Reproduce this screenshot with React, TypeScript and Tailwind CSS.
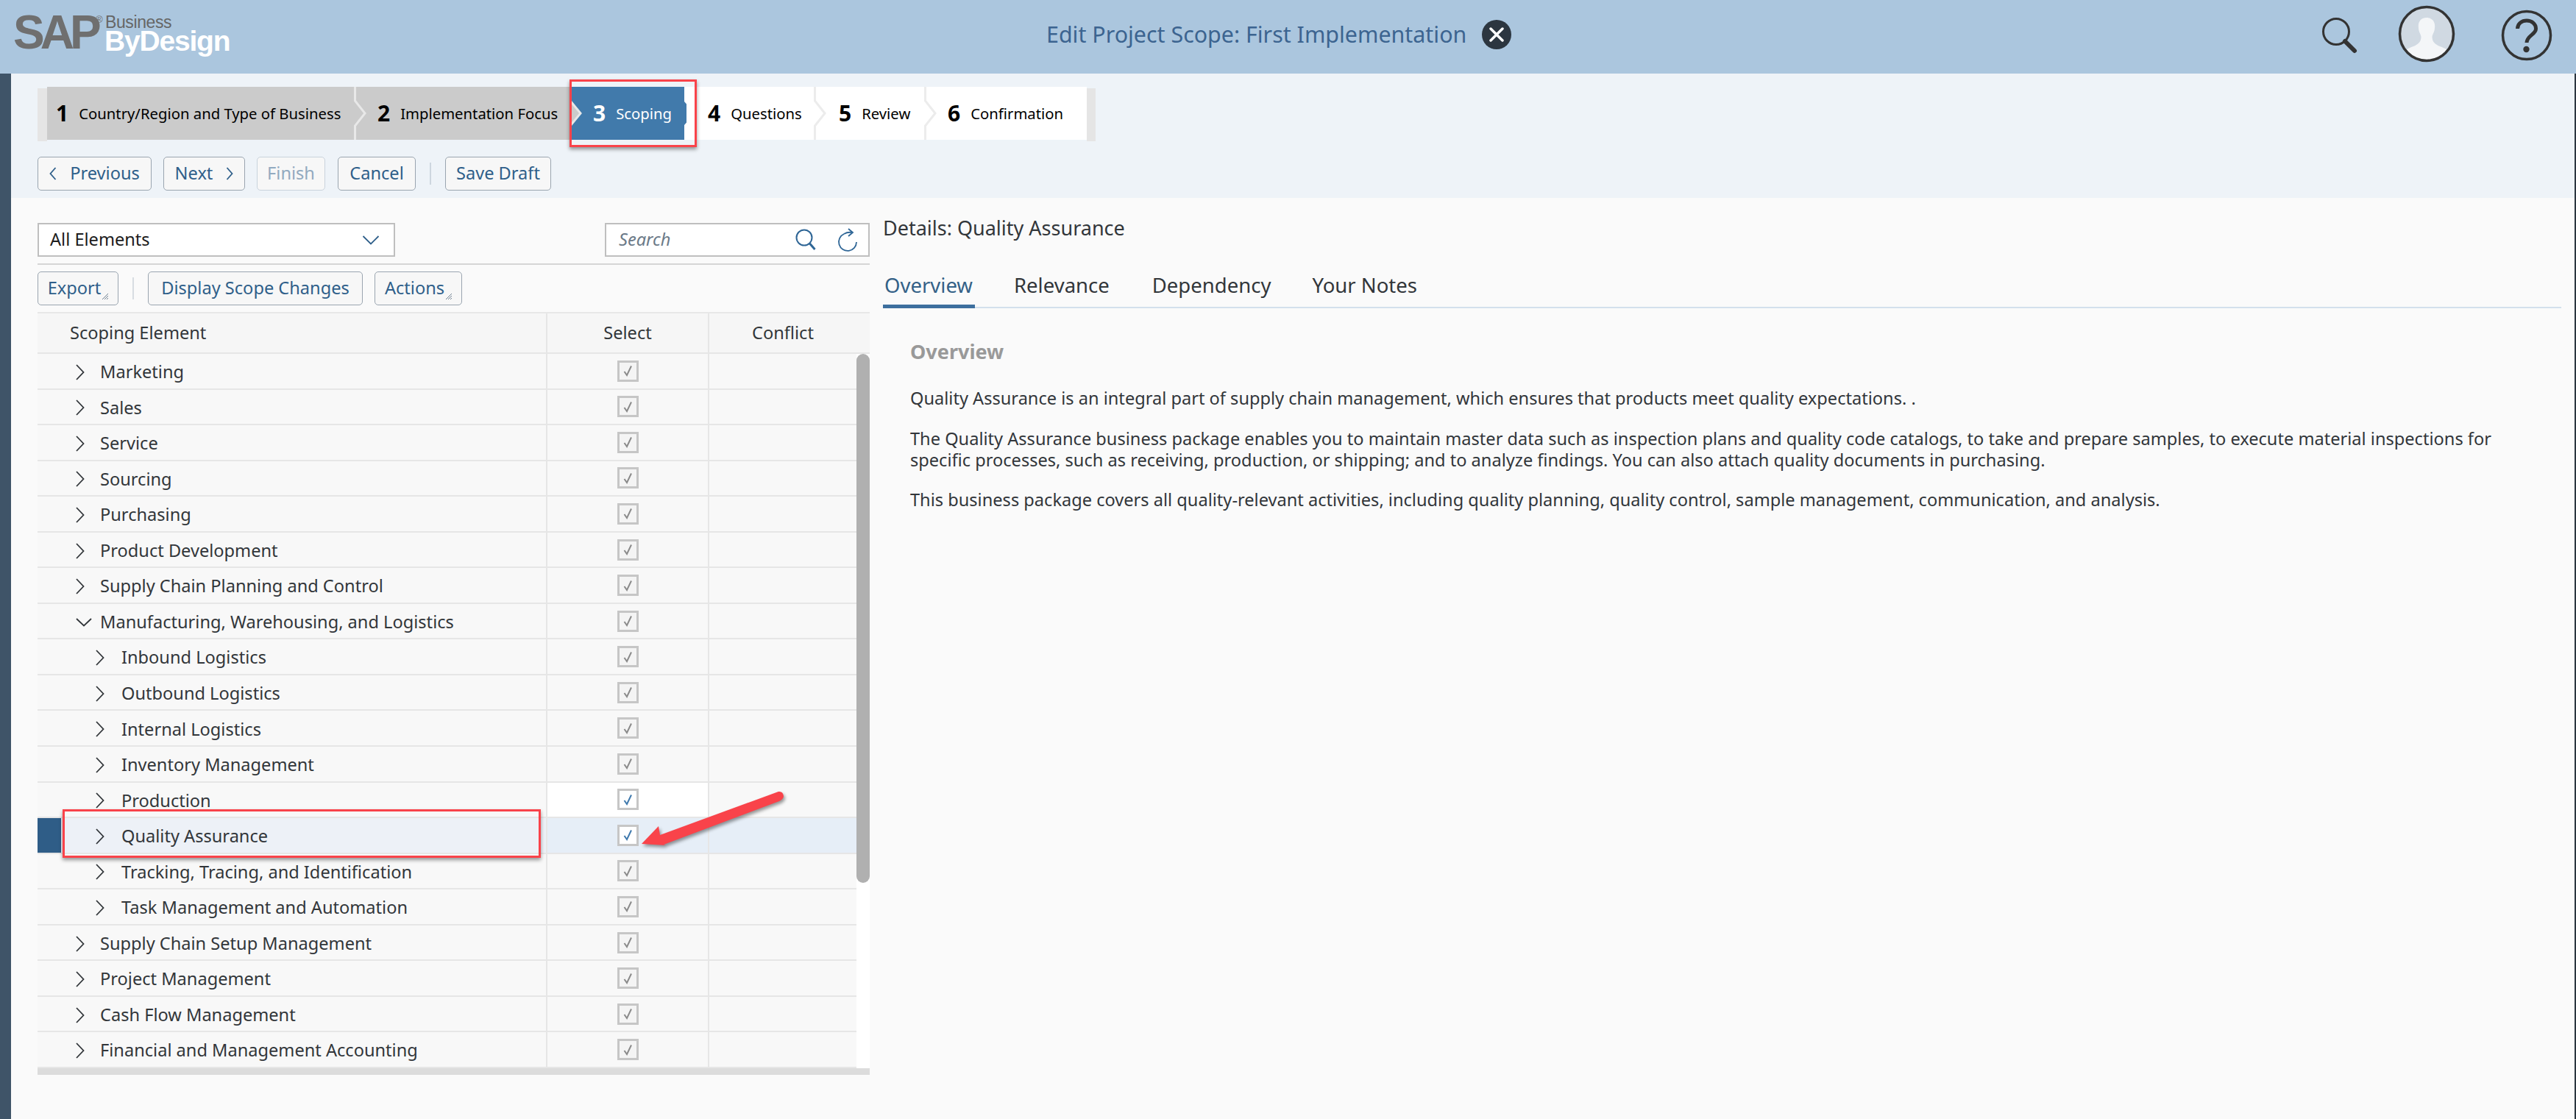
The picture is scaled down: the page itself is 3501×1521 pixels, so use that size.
import React from "react";

const font = "font-['Noto_Sans','Liberation_Sans',sans-serif]";

const steps = [
  { n: "1", label: "Country/Region and Type of Business", w: "w-[420px]", pl: "pl-[12px]", kind: "done" },
  { n: "2", label: "Implementation Focus", w: "w-[291px]", pl: "pl-[29px]", kind: "done" },
  { n: "3", label: "Scoping", w: "w-[158px]", pl: "pl-[31px]", kind: "active" },
  { n: "4", label: "Questions", w: "w-[176px]", pl: "pl-[29px]", kind: "todo" },
  { n: "5", label: "Review", w: "w-[150px]", pl: "pl-[31px]", kind: "todo" },
  { n: "6", label: "Confirmation", w: "w-[218px]", pl: "pl-[29px]", kind: "last" },
];

const rows = [
  { label: "Marketing", level: 1 },
  { label: "Sales", level: 1 },
  { label: "Service", level: 1 },
  { label: "Sourcing", level: 1 },
  { label: "Purchasing", level: 1 },
  { label: "Product Development", level: 1 },
  { label: "Supply Chain Planning and Control", level: 1 },
  { label: "Manufacturing, Warehousing, and Logistics", level: 1, open: true },
  { label: "Inbound Logistics", level: 2 },
  { label: "Outbound Logistics", level: 2 },
  { label: "Internal Logistics", level: 2 },
  { label: "Inventory Management", level: 2 },
  { label: "Production", level: 2, hover: true },
  { label: "Quality Assurance", level: 2, selected: true },
  { label: "Tracking, Tracing, and Identification", level: 2 },
  { label: "Task Management and Automation", level: 2 },
  { label: "Supply Chain Setup Management", level: 1 },
  { label: "Project Management", level: 1 },
  { label: "Cash Flow Management", level: 1 },
  { label: "Financial and Management Accounting", level: 1 },
];

function Chevron({ open }: { open?: boolean }) {
  if (open) {
    return (
      <svg width="22" height="12" viewBox="0 0 22 12" className="block">
        <polyline points="1,1 11,10.5 21,1" fill="none" stroke="#32363a" strokeWidth="1.8" />
      </svg>
    );
  }
  return (
    <svg width="12" height="22" viewBox="0 0 12 22" className="block">
      <polyline points="1,1 10.5,11 1,21" fill="none" stroke="#32363a" strokeWidth="1.8" />
    </svg>
  );
}

function Check({ active }: { active?: boolean }) {
  return (
    <div
      className={`flex h-[29px] w-[29px] items-center justify-center border-[3px] border-[#c6c6c6] ${
        active ? "bg-white" : "bg-[#f4f4f4]"
      }`}
    >
      <svg width="17" height="18" viewBox="0 0 17 18">
        <polyline
          points="3.5,10 7,15 13,2.5"
          fill="none"
          stroke={active ? "#3f79ad" : "#8a8a8a"}
          strokeWidth="2"
        />
      </svg>
    </div>
  );
}

function Btn({ children, w, disabled }: { children: React.ReactNode; w: string; disabled?: boolean }) {
  return (
    <div
      className={`relative flex h-[46px] items-center justify-center rounded-[5px] border bg-[#f7f7f7] text-[23.6px] ${w} ${
        disabled ? "border-[#c9d3dc] text-[#92aac0]" : "border-[#9aa5b0] text-[#2f5f8a]"
      }`}
    >
      {children}
    </div>
  );
}

function Hatch() {
  return (
    <svg width="10" height="10" viewBox="0 0 10 10" className="absolute bottom-[6px] right-[12px]">
      <path d="M1 9 L9 1 M4 9 L9 4 M7 9 L9 7" stroke="#6d7f90" strokeWidth="1" />
    </svg>
  );
}

function StepSep({ fill, line }: { fill: string; line: string }) {
  return (
    <svg width="18" height="72" viewBox="0 0 18 72" className="absolute left-full top-0 z-10 -ml-[3px]">
      <path d="M1.5 0 V20 L15 36 L1.5 52 V72 H0 V0 Z" fill={fill} />
      <polyline points="1.5,0 1.5,19 15,36 1.5,53 1.5,72" fill="none" stroke={line} strokeWidth="3" />
    </svg>
  );
}

function Logo() {
  return (
    <div className="relative ml-[18px] h-[100px] w-[310px] shrink-0 font-['Liberation_Sans',sans-serif]">
      <span className="absolute left-0 top-[8px] text-[64px] font-bold leading-[72px] tracking-[-6px] text-[#6f6f6f]">
        SAP
      </span>
      <span className="absolute left-[112px] top-[20px] text-[13px] leading-[14px] text-[#6f6f6f]">®</span>
      <span className="absolute left-[125px] top-[21px] text-[23px] leading-[18px] tracking-[-0.4px] text-[#666666]">
        Business
      </span>
      <span className="absolute left-[124px] top-[39px] text-[39px] font-bold leading-[34px] tracking-[-1.2px] text-white">
        ByDesign
      </span>
    </div>
  );
}

function HeaderIcons() {
  return (
    <div className="ml-auto flex items-center">
      <svg width="56" height="56" viewBox="0 0 56 56" className="mt-[2px]">
        <circle cx="21" cy="20" r="17.5" fill="none" stroke="#333" strokeWidth="3" />
        <line x1="33" y1="33" x2="46" y2="46" stroke="#333" strokeWidth="6" strokeLinecap="round" />
      </svg>
      <svg width="78" height="78" viewBox="0 0 78 78" className="ml-[49px] mt-[-8px]">
        <defs>
          <clipPath id="avatar">
            <circle cx="39" cy="39" r="35" />
          </clipPath>
        </defs>
        <circle cx="39" cy="39" r="36" fill="#d0d9e2" />
        <g clipPath="url(#avatar)" fill="#f4f6f8">
          <path d="M39 17 c-9 0 -12 7 -11 14 c0 5 3 8 3.500 12 c0 6 -3 9 -8 12 c-5 2 -11 4 -14 7 v20 h59 v-20 c-3 -3 -9 -5 -14 -7 c-5 -3 -8 -6 -8 -12 c0.500 -4 3.500 -7 3.500 -12 c1 -7 -2 -14 -11.500 -14 z" />
        </g>
        <circle cx="39" cy="39" r="36.500" fill="none" stroke="#333" strokeWidth="3.500" />
      </svg>
      <svg width="70" height="70" viewBox="0 0 70 70" className="ml-[62px] mr-[32px] mt-[-4px]">
        <circle cx="35" cy="35" r="32.500" fill="none" stroke="#333" strokeWidth="3.500" />
        <path d="M22.500 26 c0 -7 6 -11 12.500 -11 c7 0 12.500 4.500 12.500 11 c0 8 -12 9 -12.500 19" fill="none" stroke="#333" strokeWidth="5" />
        <circle cx="34.500" cy="54" r="4.200" fill="#333" />
      </svg>
    </div>
  );
}

export default function App() {
  return (
    <div className={`relative flex h-[1521px] w-[3501px] flex-col overflow-hidden bg-[#fafafa] ${font}`}>
      {/* header */}
      <header className="flex h-[100px] shrink-0 items-center bg-[#abc6de]">
        <Logo />
        <div className="mb-[6px] ml-[1094px] text-[30.4px] text-[#3c6490]">Edit Project Scope: First Implementation</div>
        <svg width="42" height="42" viewBox="0 0 42 42" className="mb-[6px] ml-[20px]">
          <circle cx="21" cy="21" r="20" fill="#2c3640" />
          <path d="M13 13 L29 29 M29 13 L13 29" stroke="#fff" strokeWidth="3.500" strokeLinecap="round" />
        </svg>
        <HeaderIcons />
      </header>

      <div className="flex min-h-0 flex-1">
        <div className="w-[15px] shrink-0 bg-[#3f5468]" />

        <main className="flex min-w-0 flex-1 flex-col">
          {/* step bar + actions */}
          <div className="h-[169px] shrink-0 bg-[#eef3f8] pl-[36px] pt-[18px]">
            <div className="flex items-start">
              <div className="mt-[2px] h-[72px] w-[13px] bg-[#e5e5e5]" />
              {steps.map((s) => (
                <div
                  key={s.n}
                  className={`relative flex h-[72px] items-center ${s.w} ${s.pl} ${
                    s.kind === "done" ? "bg-[#cbcbcb] text-black" : s.kind === "active" ? "bg-white text-white" : "bg-white text-black"
                  }`}
                >
                  {s.kind === "active" && (
                    <svg width="170" height="72" viewBox="0 0 170 72" className="absolute left-0 top-0">
                      <path d="M0 0 H155 V20 L169 36 L155 52 V72 H0 V52 L14 36 L0 20 Z" fill="#417aab" />
                      <path d="M0 20 L14 36 L0 52 Z" fill="#cbcbcb" />
                      <polyline points="0,19 14,36 0,53" fill="none" stroke="#e8e8e8" strokeWidth="3" />
                    </svg>
                  )}
                  <span className="relative mr-[15px] text-[30px] font-bold leading-none tracking-[-1px]">{s.n}</span>
                  <span className="relative text-[20.3px] leading-none">{s.label}</span>
                  {s.n === "1" && <StepSep fill="#cbcbcb" line="#e8e8e8" />}
                  {(s.n === "4" || s.n === "5") && <StepSep fill="#ffffff" line="#ececec" />}
                  {s.kind === "active" && (
                    <div className="absolute -left-[1px] -top-[10px] z-20 h-[92px] w-[173px] border-[3px] border-[#f9434a] shadow-[0_3px_5px_rgba(0,0,0,0.4)]" />
                  )}
                </div>
              ))}
              <div className="mt-[2px] h-[72px] w-[12px] bg-[#e5e5e5]" />
            </div>

            <div className="mt-[21px] flex items-center">
              <Btn w="w-[155px]">
                <svg width="10" height="18" viewBox="0 0 10 18" className="mr-[18px]">
                  <polyline points="8.500,1 1.500,9 8.500,17" fill="none" stroke="#2f5f8a" strokeWidth="1.800" />
                </svg>
                Previous
              </Btn>
              <div className="w-[16px]" />
              <Btn w="w-[111px]">
                Next
                <svg width="10" height="18" viewBox="0 0 10 18" className="ml-[18px]">
                  <polyline points="1.500,1 8.500,9 1.500,17" fill="none" stroke="#2f5f8a" strokeWidth="1.800" />
                </svg>
              </Btn>
              <div className="w-[16px]" />
              <Btn w="w-[93px]" disabled>
                Finish
              </Btn>
              <div className="w-[17px]" />
              <Btn w="w-[106px]">Cancel</Btn>
              <div className="mx-[19px] h-[30px] w-[2px] bg-[#cdd6df]" />
              <Btn w="w-[144px]">Save Draft</Btn>
            </div>
          </div>

          {/* content */}
          <div className="flex min-h-0 flex-1">
            <section className="w-[1167px] shrink-0 pl-[36px] pt-[34px]">
              <div className="flex justify-between">
                <div className="flex h-[46px] w-[486px] items-center justify-between border-2 border-[#bfbfbf] bg-white pl-[15px] pr-[19px] text-[23.6px] text-[#1c1c1c]">
                  All Elements
                  <svg width="24" height="13" viewBox="0 0 24 13">
                    <polyline points="1.500,1 12,11.500 22.500,1" fill="none" stroke="#2f5f8a" strokeWidth="1.800" />
                  </svg>
                </div>
                <div className="flex h-[46px] w-[360px] items-center border-2 border-[#bfbfbf] bg-white pl-[17px] text-[23.6px] italic text-[#6b7a88]">
                  Search
                  <svg width="30" height="32" viewBox="0 0 30 32" className="ml-auto">
                    <circle cx="13" cy="13" r="10.500" fill="none" stroke="#2f6696" strokeWidth="2" />
                    <line x1="20.500" y1="21" x2="27.500" y2="29" stroke="#2f6696" strokeWidth="3" />
                  </svg>
                  <svg width="28" height="34" viewBox="0 0 28 34" className="ml-[28px] mr-[14px]">
                    <path d="M9 9 A12 12 0 1 0 26 20" fill="none" stroke="#2f6696" strokeWidth="1.800" />
                    <path d="M9 9 Q14 6 20 7 M15 2 L21 7 L15 12" fill="none" stroke="#2f6696" strokeWidth="1.800" />
                  </svg>
                </div>
              </div>
              <div className="mt-[9px] h-[2px] bg-[#d5d5d5]" />

              <div className="flex h-[64px] items-center">
                <Btn w="w-[110px] pr-[10px]">
                  Export
                  <Hatch />
                </Btn>
                <div className="mx-[19px] h-[30px] w-[2px] bg-[#d8dde2]" />
                <Btn w="w-[292px]">Display Scope Changes</Btn>
                <div className="w-[16px]" />
                <Btn w="w-[119px] pr-[10px]">
                  Actions
                  <Hatch />
                </Btn>
              </div>

              {/* table */}
              <div className="border-t-2 border-[#e8e8e8] text-[23.6px] text-[#32363a]">
                <div className="flex h-[55px] border-b-2 border-[#e6e6e6] bg-[#f6f6f6]">
                  <div className="flex w-[691px] items-center pl-[44px]">Scoping Element</div>
                  <div className="flex w-[220px] items-center justify-center border-l-2 border-[#e6e6e6]">Select</div>
                  <div className="flex flex-1 items-center justify-center border-l-2 border-[#e6e6e6] pr-[18px]">Conflict</div>
                </div>
                <div className="flex">
                  <div className="flex-1">
                    {rows.map((r) => (
                      <div
                        key={r.label}
                        className={`relative flex h-[48.55px] border-b-2 border-[#e6e6e6] ${
                          r.selected ? "bg-[#edf1f7]" : "bg-[#f8f8f8]"
                        }`}
                      >
                        {r.selected && <div className="w-[32px] shrink-0 bg-[#2f5d87]" />}
                        <div
                          className={`flex items-center pt-[3px] ${
                            r.selected ? "w-[659px] pl-[47px]" : r.level === 2 ? "w-[691px] pl-[79px]" : "w-[691px] pl-[52px]"
                          }`}
                        >
                          <div className={`flex ${r.level === 2 ? "w-[35px]" : "w-[33px]"}`}>
                            <Chevron open={r.open} />
                          </div>
                          {r.label}
                        </div>
                        <div
                          className={`flex w-[220px] items-center justify-center border-l-2 border-[#e6e6e6] ${
                            r.selected ? "bg-[#e6eef7]" : r.hover ? "bg-white" : ""
                          }`}
                        >
                          <Check active={r.hover || r.selected} />
                        </div>
                        <div className={`flex-1 border-l-2 border-[#e6e6e6] ${r.selected ? "bg-[#e6eef7]" : ""}`} />
                        {r.selected && (
                          <div className="absolute left-[34px] top-[-12px] z-20 h-[66px] w-[650px] border-[3px] border-[#f9434a] shadow-[0_3px_5px_rgba(0,0,0,0.4)]" />
                        )}
                      </div>
                    ))}
                  </div>
                  <div className="w-[18px] shrink-0 bg-white">
                    <div className="h-[719px] rounded-[9px] bg-[#b0b0b0]" />
                  </div>
                </div>
                <div className="h-[9px] bg-[#dcdcdc]" />
              </div>
            </section>

            <section className="min-w-0 flex-1 pl-[18px] pr-[18px] pt-[24px] text-[#32363a]">
              <h2 className="text-[27px] font-normal leading-[34px] text-[#32363a]">Details: Quality Assurance</h2>
              <div className="mt-[27px] flex h-[65px] border-b-2 border-[#d3e0ec] text-[27.5px]">
                <div className="h-[65px] w-[125px] border-b-[5px] border-[#3d6f9e] pl-[2px] pt-[13px] text-[#346187]">Overview</div>
                <div className="ml-[53px] pt-[13px]">Relevance</div>
                <div className="ml-[58px] pt-[13px]">Dependency</div>
                <div className="ml-[56px] pt-[13px]">Your Notes</div>
              </div>
              <div className="pl-[37px] pt-[43px] text-[23.6px] leading-[29px]">
                <h3 className="text-[27px] font-bold leading-[32px] text-[#999999]">Overview</h3>
                <p className="mt-[33px]">
                  Quality Assurance is an integral part of supply chain management, which ensures that products meet quality expectations. .
                </p>
                <p className="mt-[26px]">
                  The Quality Assurance business package enables you to maintain master data such as inspection plans and quality code catalogs, to take and prepare samples, to execute material inspections for
                  <br />
                  specific processes, such as receiving, production, or shipping; and to analyze findings. You can also attach quality documents in purchasing.
                </p>
                <p className="mt-[25px]">
                  This business package covers all quality-relevant activities, including quality planning, quality control, sample management, communication, and analysis.
                </p>
              </div>
            </section>
          </div>
        </main>
        <div className="w-[2px] shrink-0 bg-[#2c3640]" />
      </div>

      {/* annotation arrow */}
      <svg width="240" height="110" viewBox="0 0 240 110" className="absolute left-[860px] top-[1065px] z-30 drop-shadow-[2px_3px_2px_rgba(0,0,0,0.4)]">
        <path d="M12 82 L35 58 L37 70 L198 11 Q204 10 205 17 Q205 21 199 24 L42 83 L45 84 Z" fill="#f9434a" />
      </svg>
    </div>
  );
}
